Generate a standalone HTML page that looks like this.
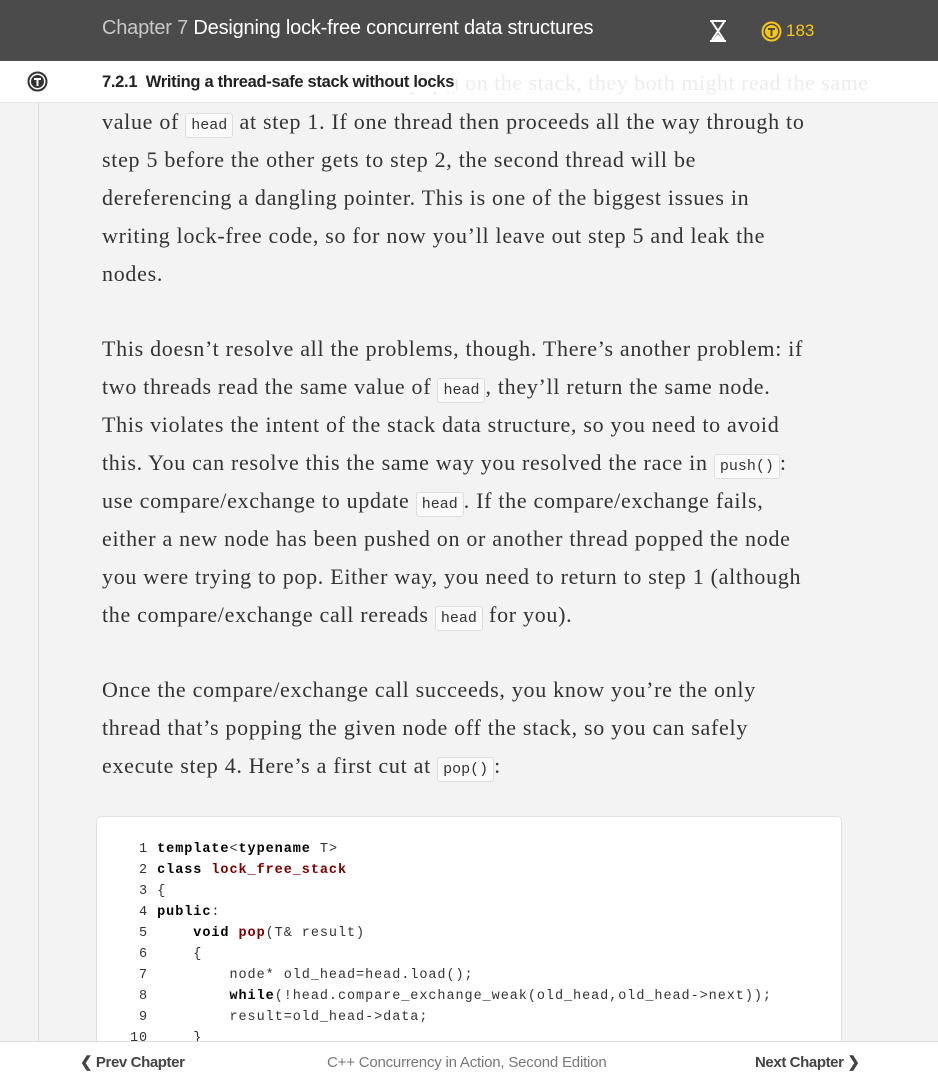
<!DOCTYPE html>
<html><head><meta charset="utf-8"><style>
*{margin:0;padding:0;box-sizing:border-box}
body{width:938px;height:1080px;overflow:hidden;background:#f3f3f3;position:relative;font-family:"Liberation Serif",serif}
.top{position:absolute;left:0;top:0;width:938px;height:61px;background:#4b4b4b}
.top .t{position:absolute;left:102px;top:17px;font:20px "Liberation Sans",sans-serif;color:#fff;white-space:nowrap;letter-spacing:-0.2px}
.top .t span{color:#c8c8c8}
.sub{position:absolute;left:0;top:61px;width:938px;height:42px;background:#fff;border-bottom:1px solid #e4e4e4}
.sub .ghost{position:absolute;left:250px;top:9px;font-size:22px;letter-spacing:0.5px;color:#ececec;white-space:nowrap}
.sub .h{position:absolute;left:102px;top:12px;font:bold 16.5px "Liberation Sans",sans-serif;color:#222;letter-spacing:-0.3px;background:#fff;padding-right:2px}
.vline{position:absolute;left:38px;top:103px;width:1px;height:940px;background:#ddd}
.p{position:absolute;left:102px;font-size:22px;letter-spacing:0.7px;line-height:38px;color:#333;white-space:nowrap}
code{font:15px "Liberation Mono",monospace;letter-spacing:0;border:1px solid #ddd;border-radius:3px;background:#fafafa;padding:3px 5px;color:#333}
.code{position:absolute;left:96px;top:816px;width:746px;height:260px;background:#fff;border:1px solid #e0e0e0;border-radius:5px}
.code pre{position:absolute;left:33px;top:22px;font:13.5px/21px "Liberation Mono",monospace;letter-spacing:0.94px;color:#333}
.code b{color:#000}.code i{font-style:normal;font-weight:bold;color:#7a0000}
.foot{position:absolute;left:0;top:1041px;width:938px;height:39px;background:#fff;border-top:1px solid #ddd;font-family:"Liberation Sans",sans-serif;font-size:15px}
</style></head><body>
<div class="top"><div class="t"><span>Chapter 7</span> Designing lock-free concurrent data structures</div>
<svg style="position:absolute;left:708px;top:20px" width="20" height="22" viewBox="0 0 20 22"><path d="M2 1H18M2 21H18M4 2L10 11L4 20M16 2L10 11L16 20" stroke="#fff" stroke-width="2" fill="none"/><path d="M5 20L10 14L15 20Z" fill="#fff"/></svg>
<svg style="position:absolute;left:761px;top:21px" width="21" height="21" viewBox="0 0 21 21"><circle cx="10.5" cy="10.5" r="9" stroke="#f5c518" stroke-width="2" fill="none"/><circle cx="10.5" cy="10.5" r="6.5" fill="#f5c518"/><path d="M7 8H14M10.5 8V15" stroke="#4b4b4b" stroke-width="2"/></svg>
<div style="position:absolute;left:786px;top:21px;font:17px 'Liberation Sans',sans-serif;color:#f5c518">183</div></div>
<div class="sub"><div class="ghost">Two threads call pop() on the stack, they both might read the same</div>
<svg style="position:absolute;left:27px;top:10px" width="21" height="21" viewBox="0 0 21 21"><circle cx="10.5" cy="10.5" r="9" stroke="#333" stroke-width="2" fill="#fff"/><circle cx="10.5" cy="10.5" r="6.5" fill="#333"/><path d="M7 8H14M10.5 8V15" stroke="#fff" stroke-width="2"/></svg>
<div class="h">7.2.1&nbsp; Writing a thread-safe stack without locks</div></div>
<div class="vline"></div>
<div class="p" style="top:103px">value of <code>head</code> at step 1. If one thread then proceeds all the way through to<br>step 5 before the other gets to step 2, the second thread will be<br>dereferencing a dangling pointer. This is one of the biggest issues in<br>writing lock-free code, so for now you’ll leave out step 5 and leak the<br>nodes.</div>
<div class="p" style="top:330px">This doesn’t resolve all the problems, though. There’s another problem: if<br>two threads read the same value of <code>head</code>, they’ll return the same node.<br>This violates the intent of the stack data structure, so you need to avoid<br>this. You can resolve this the same way you resolved the race in <code>push()</code>:<br>use compare/exchange to update <code>head</code>. If the compare/exchange fails,<br>either a new node has been pushed on or another thread popped the node<br>you were trying to pop. Either way, you need to return to step 1 (although<br>the compare/exchange call rereads <code>head</code> for you).</div>
<div class="p" style="top:671px">Once the compare/exchange call succeeds, you know you’re the only<br>thread that’s popping the given node off the stack, so you can safely<br>execute step 4. Here’s a first cut at <code>pop()</code>:</div>
<div class="code"><pre> 1 <b>template</b>&lt;<b>typename</b> T&gt;
 2 <b>class</b> <i>lock_free_stack</i>
 3 {
 4 <b>public</b>:
 5     <b>void</b> <i>pop</i>(T&amp; result)
 6     {
 7         node* old_head=head.load();
 8         <b>while</b>(!head.compare_exchange_weak(old_head,old_head-&gt;next));
 9         result=old_head-&gt;data;
10     }</pre></div>
<div class="foot">
<div style="position:absolute;left:80px;top:11px;color:#444;font-weight:bold;letter-spacing:-0.4px">❮ Prev Chapter</div>
<div style="position:absolute;left:327px;top:12px;color:#777;letter-spacing:-0.2px">C++ Concurrency in Action, Second Edition</div>
<div style="position:absolute;left:755px;top:11px;color:#444;font-weight:bold;letter-spacing:-0.4px">Next Chapter ❯</div>
</div>
</body></html>
